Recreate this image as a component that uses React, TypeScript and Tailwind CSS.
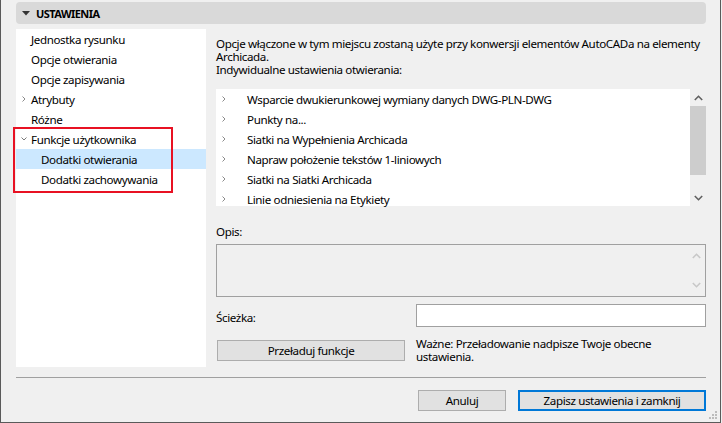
import React from "react";

const Chev = ({ down = false }: { down?: boolean }) => (
  <svg width="6" height="6" viewBox="0 0 6 6" className="block">
    {down ? (
      <polyline points="0.5,1.5 3,4 5.5,1.5" fill="none" stroke="#7a7a7a" strokeWidth="1" />
    ) : (
      <polyline points="1.5,0.5 4,3 1.5,5.5" fill="none" stroke="#8a8a8a" strokeWidth="1" />
    )}
  </svg>
);

const Arrow = ({ up, color }: { up: boolean; color: string }) => (
  <svg width="9" height="6" viewBox="0 0 9 6" className="block">
    {up ? (
      <polyline points="0.8,5 4.5,1.3 8.2,5" fill="none" stroke={color} strokeWidth="1.6" />
    ) : (
      <polyline points="0.8,1 4.5,4.7 8.2,1" fill="none" stroke={color} strokeWidth="1.6" />
    )}
  </svg>
);

const treeItems: { label: string; indent?: boolean; chev?: "right" | "down"; selected?: boolean }[] = [
  { label: "Jednostka rysunku" },
  { label: "Opcje otwierania" },
  { label: "Opcje zapisywania" },
  { label: "Atrybuty", chev: "right" },
  { label: "Różne" },
  { label: "Funkcje użytkownika", chev: "down" },
  { label: "Dodatki otwierania", indent: true, selected: true },
  { label: "Dodatki zachowywania", indent: true },
];

const listItems = [
  "Wsparcie dwukierunkowej wymiany danych DWG-PLN-DWG",
  "Punkty na...",
  "Siatki na Wypełnienia Archicada",
  "Napraw położenie tekstów 1-liniowych",
  "Siatki na Siatki Archicada",
  "Linie odniesienia na Etykiety",
];

export default function App() {
  return (
    <div className="w-[722px] h-[423px] bg-[#f0f0f0] font-['Noto_Sans',sans-serif] text-[11.6px] tracking-[-0.38px] text-black leading-[13px] overflow-hidden whitespace-nowrap">
      <div className="w-[721px] h-[423px] border-l border-r border-b border-[#5a5a5a] pl-[15px] pr-[14px] flex flex-col relative">
        {/* Header */}
        <div className="mt-[2px] h-[22px] rounded-[4px] bg-[#d9d9d9] flex items-center">
          <svg width="8" height="5" viewBox="0 0 8 5" className="ml-[6px]">
            <polygon points="0,0 8,0 4,4.5" fill="#333" />
          </svg>
          <span className="ml-[6px] font-bold text-[11px] tracking-[-0.55px]">USTAWIENIA</span>
        </div>

        {/* Body */}
        <div className="mt-[5px] flex h-[338px]">
          {/* Tree */}
          <div className="w-[190px] shrink-0 h-full bg-white relative">
            {treeItems.map((it) => (
              <div
                key={it.label}
                className={`h-[20px] flex items-center relative ${it.indent ? "pl-[25px]" : "pl-[15px]"} ${it.selected ? "bg-[#cce8ff]" : ""}`}
              >
                {it.chev && (
                  <span className="absolute left-[5px] top-[7px]">
                    <Chev down={it.chev === "down"} />
                  </span>
                )}
                <span>{it.label}</span>
              </div>
            ))}
            <div className="absolute left-[-3px] top-[98px] w-[160px] h-[66px] border-2 border-[#e81123] pointer-events-none" />
          </div>

          {/* Right column */}
          <div className="ml-[10px] flex-1 min-w-0 flex flex-col">
            <div className="pt-[8px]">
              <div>Opcje włączone w tym miejscu zostaną użyte przy konwersji elementów AutoCADa na elementy</div>
              <div>Archicada.</div>
              <div>Indywidualne ustawienia otwierania:</div>
            </div>

            {/* List */}
            <div className="mt-[13px] h-[117px] flex">
              <div className="flex-1 bg-white">
                {listItems.map((t) => (
                  <div key={t} className="h-[20px] flex items-center relative pl-[31px]">
                    <span className="absolute left-[5px] top-[7px]">
                      <Chev />
                    </span>
                    <span>{t}</span>
                  </div>
                ))}
              </div>
              <div className="w-[16px] flex flex-col items-center">
                <div className="h-[17px] flex items-center justify-center">
                  <Arrow up color="#606060" />
                </div>
                <div className="w-full h-[69px] bg-[#cdcdcd]" />
                <div className="flex-1" />
                <div className="h-[17px] flex items-center justify-center">
                  <Arrow up={false} color="#606060" />
                </div>
              </div>
            </div>

            {/* Opis */}
            <div className="mt-[19px]">Opis:</div>
            <div className="mt-[6px] h-[53px] border border-[#a0a0a0] bg-[#f0f0f0] flex justify-end">
              <div className="w-[17px] flex flex-col items-center justify-between py-[8px]">
                <Arrow up color="#c8c8c8" />
                <Arrow up={false} color="#c8c8c8" />
              </div>
            </div>

            {/* Ścieżka */}
            <div className="mt-[7px] flex items-center h-[23px]">
              <div className="w-[200px] pt-[4px]">Ścieżka:</div>
              <div className="flex-1 h-[23px] bg-white border border-[#a0a0a0]" />
            </div>

            {/* Reload */}
            <div className="mt-[13px] flex items-start">
              <button className="ml-[1px] w-[188px] h-[21px] bg-[#e1e1e1] border border-[#adadad] flex items-center justify-center">
                Przeładuj funkcje
              </button>
              <div className="ml-[11px] -mt-[3px]">
                <div>Ważne: Przeładowanie nadpisze Twoje obecne</div>
                <div>ustawienia.</div>
              </div>
            </div>
          </div>
        </div>

        {/* Separator */}
        <div className="mt-[10px] h-px bg-[#a0a0a0]" />

        {/* Buttons */}
        <div className="mt-[12px] flex justify-end">
          <button className="w-[88px] h-[21px] bg-[#e1e1e1] border border-[#adadad] flex items-center justify-center">
            Anuluj
          </button>
          <button className="ml-[12px] w-[188px] h-[21px] bg-[#e1e1e1] border-2 border-[#0078d7] flex items-center justify-center">
            Zapisz ustawienia i zamknij
          </button>
        </div>

        {/* Grip */}
        <svg width="9" height="9" viewBox="0 0 9 9" className="absolute right-[2px] bottom-[2px]">
          <rect x="6" y="0" width="2" height="2" fill="#bcbcbc" />
          <rect x="3" y="3" width="2" height="2" fill="#bcbcbc" />
          <rect x="6" y="3" width="2" height="2" fill="#bcbcbc" />
          <rect x="0" y="6" width="2" height="2" fill="#bcbcbc" />
          <rect x="3" y="6" width="2" height="2" fill="#bcbcbc" />
          <rect x="6" y="6" width="2" height="2" fill="#bcbcbc" />
        </svg>
      </div>
    </div>
  );
}
